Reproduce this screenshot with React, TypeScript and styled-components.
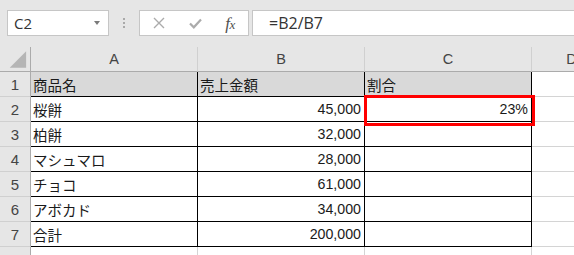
import React from "react";
import styled, { createGlobalStyle } from "styled-components";

const GlobalStyle = createGlobalStyle`
  html, body { margin: 0; padding: 0; background: #ffffff; overflow: hidden; }
  * { box-sizing: border-box; }
`;

const Frame = styled.div`
  width: 574px;
  height: 255px;
  overflow: hidden;
  background: #ffffff;
`;

const Toolbar = styled.div`
  display: flex;
  align-items: flex-start;
  height: 47px;
  padding: 10px 0 0 7px;
  background: #e6e6e6;
  font-family: "Open Sans", "Liberation Sans", sans-serif;
`;

const NameBox = styled.div`
  width: 102px;
  height: 26px;
  display: flex;
  align-items: center;
  justify-content: space-between;
  padding: 0 8px 0 6px;
  background: #ffffff;
  border: 1px solid #c6c6c6;
  color: #333333;
  font-size: 15px;
`;

const Caret = styled.span`
  width: 0;
  height: 0;
  border-left: 3.5px solid transparent;
  border-right: 3.5px solid transparent;
  border-top: 4px solid #7a7a7a;
`;

const Grip = styled.div`
  width: 30px;
  height: 26px;
  display: flex;
  flex-direction: column;
  align-items: center;
  justify-content: center;
  gap: 2px;
`;

const Dot = styled.span`
  width: 2px;
  height: 2px;
  background: #a9a9a9;
`;

const FxButtons = styled.div`
  width: 110px;
  height: 26px;
  display: grid;
  grid-template-columns: 38px 34px 38px;
  background: #ffffff;
  border: 1px solid #c6c6c6;
  margin-right: 3px;
`;

const IconSlot = styled.div`
  display: flex;
  align-items: center;
  justify-content: center;
`;

const FxLabel = styled.span`
  font-family: "Liberation Serif", "DejaVu Serif", serif;
  font-style: italic;
  font-size: 17px;
  color: #505050;
  letter-spacing: -0.5px;
  line-height: 1;
  margin-right: 2px;
`;

const FxSub = styled.span`
  font-size: 13px;
`;

const FormulaInput = styled.div`
  flex: 1;
  height: 26px;
  display: flex;
  align-items: center;
  padding-left: 16px;
  background: #ffffff;
  border: 1px solid #c6c6c6;
  border-right: none;
  color: #333333;
  font-size: 16px;
`;

const Sheet = styled.div`
  display: grid;
  grid-template-columns: 31px 167px 167px 167px 80px;
  grid-auto-rows: 25px;
  font-family: "Liberation Sans", "Noto Sans CJK JP", sans-serif;
`;

type CellProps = {
  $bg?: string;
  $right?: string;
  $bottom?: string;
  $align?: "left" | "center" | "right";
  $size?: number;
  $color?: string;
};

const Cell = styled.div<CellProps>`
  position: relative;
  display: flex;
  align-items: center;
  justify-content: ${(p) =>
    p.$align === "right" ? "flex-end" : p.$align === "center" ? "center" : "flex-start"};
  padding: ${(p) => (p.$align === "right" ? "0 3px 0 0" : p.$align === "center" ? "0" : "0 0 0 2px")};
  background: ${(p) => p.$bg ?? "#ffffff"};
  border-right: 1px solid ${(p) => p.$right ?? "#d4d4d4"};
  border-bottom: 1px solid ${(p) => p.$bottom ?? "#d4d4d4"};
  color: ${(p) => p.$color ?? "#1a1a1a"};
  font-size: ${(p) => p.$size ?? 14.5}px;
  white-space: nowrap;
  overflow: visible;
`;

const HeaderCell = styled(Cell)`
  padding: 0;
`;

const SelectionBox = styled.div`
  position: absolute;
  left: -1px;
  top: -2px;
  width: 171px;
  height: 31px;
  border: 3px solid #ff0000;
  pointer-events: none;
  z-index: 2;
`;

const CornerTriangle = () => (
  <svg width="31" height="25" viewBox="0 0 31 25">
    <polygon points="27,4 27,21 10,21" fill="#b5b5b5" />
  </svg>
);

const CrossIcon = () => (
  <svg width="12" height="12" viewBox="0 0 12 12">
    <path d="M1 1 L11 11 M11 1 L1 11" stroke="#ababab" strokeWidth="1.4" fill="none" />
  </svg>
);

const CheckIcon = () => (
  <svg width="13" height="11" viewBox="0 0 13 11">
    <path d="M1 5.5 L4.8 9.3 L12 1.5" stroke="#ababab" strokeWidth="2.2" fill="none" />
  </svg>
);

type Row = { n: number; name: string; amount: string; ratio: string };

const rows: Row[] = [
  { n: 2, name: "桜餅", amount: "45,000", ratio: "23%" },
  { n: 3, name: "柏餅", amount: "32,000", ratio: "" },
  { n: 4, name: "マシュマロ", amount: "28,000", ratio: "" },
  { n: 5, name: "チョコ", amount: "61,000", ratio: "" },
  { n: 6, name: "アボカド", amount: "34,000", ratio: "" },
  { n: 7, name: "合計", amount: "200,000", ratio: "" },
];

const HDR_BG = "#e6e6e6";
const HDR_EDGE = "#ababab";
const HDR_SEP = "#d0d0d0";
const INK = "#000000";
const HDR_TEXT = "#444444";

export default function App() {
  return (
    <Frame>
      <GlobalStyle />
      <Toolbar>
        <NameBox>
          <span>C2</span>
          <Caret />
        </NameBox>
        <Grip>
          <Dot />
          <Dot />
          <Dot />
        </Grip>
        <FxButtons>
          <IconSlot>
            <CrossIcon />
          </IconSlot>
          <IconSlot>
            <CheckIcon />
          </IconSlot>
          <IconSlot>
            <FxLabel>
              f<FxSub>x</FxSub>
            </FxLabel>
          </IconSlot>
        </FxButtons>
        <FormulaInput>=B2/B7</FormulaInput>
      </Toolbar>
      <Sheet>
        <HeaderCell $bg={HDR_BG} $right={HDR_EDGE} $bottom={HDR_EDGE}>
          <CornerTriangle />
        </HeaderCell>
        {["A", "B", "C", "D"].map((c) => (
          <HeaderCell key={c} $bg={HDR_BG} $right={HDR_SEP} $bottom={HDR_EDGE} $align="center" $color={HDR_TEXT} $size={14.5}>
            {c}
          </HeaderCell>
        ))}

        <HeaderCell $bg={HDR_BG} $right={HDR_EDGE} $bottom={HDR_SEP} $align="center" $color={HDR_TEXT} $size={15}>
          1
        </HeaderCell>
        <Cell $bg="#d9d9d9" $right={INK} $bottom={INK}>商品名</Cell>
        <Cell $bg="#d9d9d9" $right={INK} $bottom={INK}>売上金額</Cell>
        <Cell $bg="#d9d9d9" $right={INK} $bottom={INK}>割合</Cell>
        <Cell />

        {rows.map((r) => (
          <React.Fragment key={r.n}>
            <HeaderCell $bg={HDR_BG} $right={HDR_EDGE} $bottom={HDR_SEP} $align="center" $color={HDR_TEXT} $size={15}>
              {r.n}
            </HeaderCell>
            <Cell $right={INK} $bottom={INK}>{r.name}</Cell>
            <Cell $right={INK} $bottom={INK} $align="right" $size={14.2}>{r.amount}</Cell>
            <Cell $right={INK} $bottom={INK} $align="right" $size={14.2}>
              {r.ratio}
              {r.n === 2 && <SelectionBox />}
            </Cell>
            <Cell />
          </React.Fragment>
        ))}

        <HeaderCell $bg={HDR_BG} $right={HDR_EDGE} $bottom={HDR_SEP} $align="center" $color={HDR_TEXT} $size={15}>
          8
        </HeaderCell>
        <Cell />
        <Cell />
        <Cell />
        <Cell />
      </Sheet>
    </Frame>
  );
}
